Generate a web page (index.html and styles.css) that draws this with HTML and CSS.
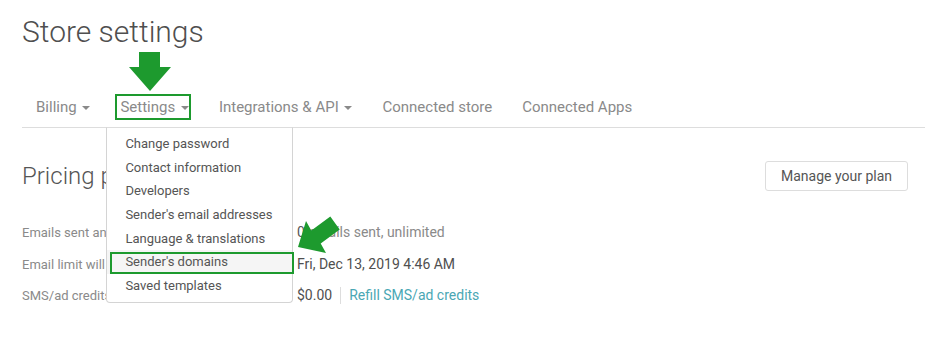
FILE: index.html
```html
<!DOCTYPE html>
<html lang="en">
<head>
    <meta charset="UTF-8">
    <meta name="viewport" content="width=device-width, initial-scale=1.0">
    <title>Store settings</title>
    <link rel="stylesheet" href="styles.css">
</head>
<body>
    <h1 class="page-title">Store settings</h1>

    <ul class="tabs">
        <li class="tab"><a href="#">Billing <span class="caret"></span></a></li>
        <li class="tab tab-open">
            <a href="#" class="tab-marked">Settings <span class="caret"></span></a>
            <svg class="arrow-down" width="44" height="40" viewBox="0 0 44 40">
                <polygon points="11,0 32,0 32,15 43,15 22,39 1,15 11,15" fill="#1d9a2e"/>
            </svg>
            <ul class="dropdown">
                <li><a href="#">Change password</a></li>
                <li><a href="#">Contact information</a></li>
                <li><a href="#">Developers</a></li>
                <li><a href="#">Sender's email addresses</a></li>
                <li><a href="#">Language &amp; translations</a></li>
                <li class="active"><a href="#">Sender's domains</a></li>
                <li><a href="#">Saved templates</a></li>
            </ul>
        </li>
        <li class="tab"><a href="#">Integrations &amp; API <span class="caret"></span></a></li>
        <li class="tab"><a href="#">Connected store</a></li>
        <li class="tab"><a href="#">Connected Apps</a></li>
    </ul>

    <div class="pricing">
        <div class="pricing-head">
            <h2>Pricing plan</h2>
            <button class="btn">Manage your plan</button>
        </div>
        <div class="rows">
            <div class="label"><span>Emails sent and remaining</span></div>
            <div class="value"><span class="num">0</span> emails sent, unlimited</div>
            <div class="label"><span>Email limit will be reset on</span></div>
            <div class="value dark">Fri, Dec 13, 2019 4:46 AM</div>
            <div class="label"><span>SMS/ad credits balance</span></div>
            <div class="value dark">$0.00 <span class="sep"></span> <a href="#" class="link">Refill SMS/ad credits</a></div>
        </div>
    </div>

    <svg class="arrow-side" width="60" height="50" viewBox="285 210 60 50">
        <polygon points="298,247 306,221 311.3,230.6 330.3,216.6 339.7,229.4 320.7,243.4 326,253" fill="#1d9a2e"/>
    </svg>
</body>
</html>
```

FILE: styles.css
```css
body {
    font-family: Roboto, "Liberation Sans", sans-serif;
    margin: 0;
    padding: 0 0 0 22px;
    background: #fff;
    color: #555;
    position: relative;
}
a {
    text-decoration: none;
}
.page-title {
    font-size: 30px;
    font-weight: 300;
    line-height: 40px;
    margin: 12px 0 35px;
    color: #4f4f4f;
}
.tabs {
    list-style: none;
    margin: 0;
    padding: 0;
    display: flex;
    border-bottom: 1px solid #ddd;
}
.tab {
    position: relative;
    margin-right: 2px;
}
.tab > a {
    display: block;
    padding: 10px 14px;
    line-height: 20px;
    font-size: 15px;
    color: #8a8a8a;
    position: relative;
}
.caret {
    display: inline-block;
    width: 0;
    height: 0;
    margin-left: 2px;
    vertical-align: middle;
    border-top: 4px solid #8a8a8a;
    border-left: 4px solid transparent;
    border-right: 4px solid transparent;
}
.tab-marked::after {
    content: "";
    position: absolute;
    left: 9px;
    top: 7px;
    width: 76px;
    height: 26px;
    box-sizing: border-box;
    border: 2px solid #1d9a2e;
}
.arrow-down {
    position: absolute;
    left: 22px;
    top: -35px;
}
.dropdown {
    position: absolute;
    left: 0;
    top: 40px;
    width: 187px;
    box-sizing: border-box;
    list-style: none;
    margin: 0;
    padding: 4px 0;
    background: #fff;
    border: 1px solid #d4d4d4;
    border-top-color: #ddd;
    border-radius: 0 0 4px 4px;
    z-index: 5;
}
.dropdown li {
    position: relative;
}
.dropdown a {
    display: block;
    padding: 0 18px;
    line-height: 23.67px;
    font-size: 13px;
    color: #555;
    white-space: nowrap;
}
.dropdown .active a {
    background: #f5f5f5;
}
.dropdown .active::after {
    content: "";
    position: absolute;
    left: 3px;
    right: -2px;
    top: 2px;
    bottom: 0;
    border: 2px solid #1d9a2e;
}
.pricing {
    padding-right: 17px;
}
.pricing-head {
    display: flex;
    justify-content: space-between;
    align-items: center;
    margin-top: 33px;
    height: 30px;
}
.pricing-head h2 {
    margin: 0;
    font-size: 24px;
    font-weight: 300;
    color: #555;
}
.btn {
    font-family: inherit;
    font-size: 14px;
    color: #555;
    background: #fff;
    border: 1px solid #ddd;
    border-radius: 3px;
    width: 143px;
    height: 30px;
    padding: 0;
}
.rows {
    display: grid;
    grid-template-columns: 275px 1fr;
    margin-top: 26px;
}
.label {
    font-size: 13px;
    line-height: 31.5px;
    color: #8a8a8a;
}
.label span {
    display: block;
    max-width: 84px;
    white-space: nowrap;
    overflow: hidden;
}
.value {
    font-size: 14px;
    line-height: 31.5px;
    color: #8a8a8a;
    display: flex;
    align-items: center;
    gap: 8px;
}
.value .num {
    color: #555;
    margin-right: -4px;
}
.value.dark {
    color: #4f4f4f;
}
.sep {
    display: inline-block;
    width: 1px;
    height: 17px;
    background: #ddd;
}
.link {
    color: #4aa7b4;
}
.arrow-side {
    position: absolute;
    left: 285px;
    top: 210px;
}
```
